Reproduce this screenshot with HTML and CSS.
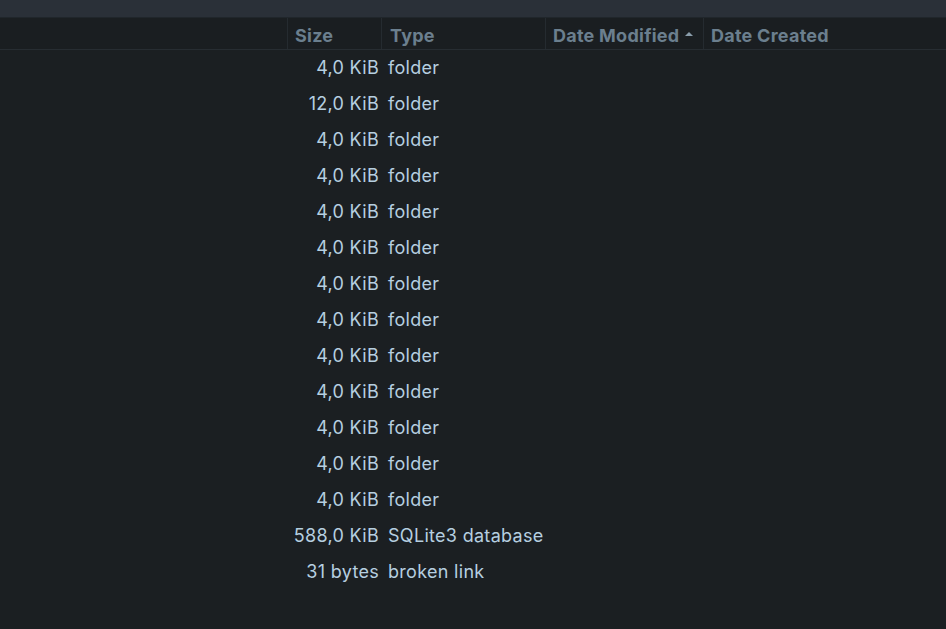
FILE: index.html
```html
<!DOCTYPE html>
<html>
<head>
<meta charset="utf-8">
<link rel="stylesheet" href="styles.css">
</head>
<body>
<div class="topbar"></div>
<div class="header">
  <div class="col name"></div>
  <div class="col size"><span>Size</span></div>
  <div class="col type"><span>Type</span></div>
  <div class="col mod"><span>Date Modified</span><span class="arrow"></span></div>
  <div class="col created"><span>Date Created</span></div>
</div>
<div class="rows">
  <div class="row"><div class="c name"></div><div class="c size">4,0 KiB</div><div class="c type">folder</div></div>
  <div class="row"><div class="c name"></div><div class="c size">12,0 KiB</div><div class="c type">folder</div></div>
  <div class="row"><div class="c name"></div><div class="c size">4,0 KiB</div><div class="c type">folder</div></div>
  <div class="row"><div class="c name"></div><div class="c size">4,0 KiB</div><div class="c type">folder</div></div>
  <div class="row"><div class="c name"></div><div class="c size">4,0 KiB</div><div class="c type">folder</div></div>
  <div class="row"><div class="c name"></div><div class="c size">4,0 KiB</div><div class="c type">folder</div></div>
  <div class="row"><div class="c name"></div><div class="c size">4,0 KiB</div><div class="c type">folder</div></div>
  <div class="row"><div class="c name"></div><div class="c size">4,0 KiB</div><div class="c type">folder</div></div>
  <div class="row"><div class="c name"></div><div class="c size">4,0 KiB</div><div class="c type">folder</div></div>
  <div class="row"><div class="c name"></div><div class="c size">4,0 KiB</div><div class="c type">folder</div></div>
  <div class="row"><div class="c name"></div><div class="c size">4,0 KiB</div><div class="c type">folder</div></div>
  <div class="row"><div class="c name"></div><div class="c size">4,0 KiB</div><div class="c type">folder</div></div>
  <div class="row"><div class="c name"></div><div class="c size">4,0 KiB</div><div class="c type">folder</div></div>
  <div class="row"><div class="c name"></div><div class="c size">588,0 KiB</div><div class="c type">SQLite3 database</div></div>
  <div class="row"><div class="c name"></div><div class="c size">31 bytes</div><div class="c type">broken link</div></div>
</div>
</body>
</html>
```
FILE: styles.css
```css
html, body {
  margin: 0;
  padding: 0;
  background: #1b1f22;
  height: 100%;
  overflow: hidden;
  font-family: Inter, "Noto Sans", sans-serif;
}
.topbar {
  height: 17px;
  background: #2a3038;
  border-bottom: 1px solid #20262b;
}
.header {
  display: flex;
  height: 31px;
  background: #1a1e21;
  border-bottom: 1px solid #272d32;
  font-size: 18px;
  font-weight: 700;
  letter-spacing: 0.25px;
  color: #6b7f8e;
}
.header .col {
  display: flex;
  align-items: center;
  padding-left: 7px;
  padding-top: 3px;
  box-sizing: border-box;
  border-right: 1px solid #252b30;
  white-space: nowrap;
}
.header .col.name { width: 288px; padding-left: 0; }
.header .col.size { width: 94px; }
.header .col.type { width: 164px; padding-left: 8px; }
.header .col.mod { width: 158px; }
.header .col.created { flex: 1; border-right: none; }
.arrow {
  width: 0;
  height: 0;
  margin-left: 6px;
  margin-top: -2px;
  border-left: 4px solid transparent;
  border-right: 4px solid transparent;
  border-bottom: 4px solid #8a9dab;
}
.rows {
  display: flex;
  flex-direction: column;
}
.row {
  display: flex;
  height: 36px;
  align-items: center;
  font-size: 18px;
  letter-spacing: 0.3px;
  color: #b6cfe0;
  white-space: nowrap;
  margin-top: -1px;
  margin-bottom: 1px;
}
.c.name { width: 288px; }
.c.size {
  width: 94px;
  box-sizing: border-box;
  text-align: right;
  padding-right: 3px;
}
.c.type {
  padding-left: 6px;
}
```
